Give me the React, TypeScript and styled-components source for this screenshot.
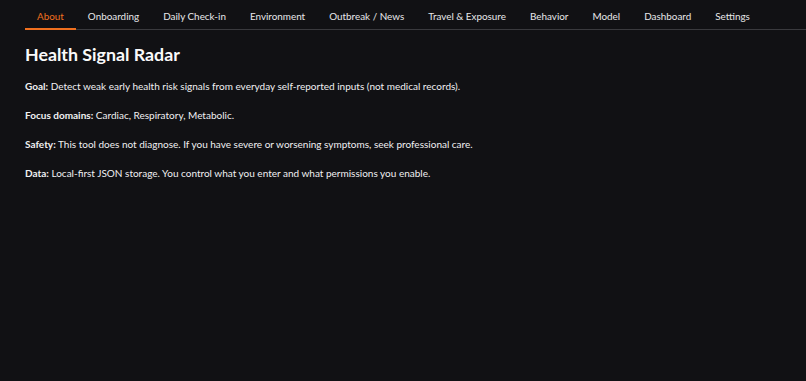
import React, { useState } from "react";
import styled, { createGlobalStyle } from "styled-components";

const GlobalStyle = createGlobalStyle`
    html, body {
        margin: 0;
        padding: 0;
        background-color: #111114;
    }
    body {
        font-family: Lato, "Liberation Sans", sans-serif;
        color: #fafafa;
    }
`;

const Page = styled.div`
    min-height: 381px;
    padding-left: 25px;
    background-color: #111114;
`;

const TabBar = styled.div`
    display: flex;
    align-items: flex-end;
    height: 29px;
    border-bottom: 1px solid #3a3a3e;
`;

const Tab = styled.button<{ $active?: boolean }>`
    display: flex;
    align-items: center;
    height: 28px;
    margin-bottom: -1px;
    padding: 2px 12px 0 12px;
    border: none;
    border-bottom: 2px solid ${(p) => (p.$active ? "#f0701f" : "transparent")};
    background-color: transparent;
    color: ${(p) => (p.$active ? "#f0701f" : "#e8e8ea")};
    font-family: Lato, "Liberation Sans", sans-serif;
    font-size: 9.9px;
    white-space: nowrap;
    cursor: pointer;
`;

const Content = styled.div`
    padding-top: 12px;
    padding-right: 25px;
`;

const Title = styled.h1`
    margin: 0 0 13px 0;
    color: #fafafa;
    font-size: 17.8px;
    font-weight: 700;
    line-height: 24px;
`;

const Para = styled.p`
    margin: 0 0 15px 0;
    color: #f0f0f2;
    font-size: 10px;
    line-height: 14px;
    b {
        font-weight: 700;
    }
`;

const tabs = [
    "About",
    "Onboarding",
    "Daily Check-in",
    "Environment",
    "Outbreak / News",
    "Travel & Exposure",
    "Behavior",
    "Model",
    "Dashboard",
    "Settings",
];

const App = () => {
    const [active, setActive] = useState("About");
    return (
        <>
            <GlobalStyle />
            <Page>
                <TabBar>
                    {tabs.map((t) => (
                        <Tab key={t} $active={t === active} onClick={() => setActive(t)}>
                            {t}
                        </Tab>
                    ))}
                </TabBar>
                <Content>
                    <Title>Health Signal Radar</Title>
                    <Para>
                        <b>Goal:</b> Detect weak early health risk signals from everyday self-reported inputs (not medical records).
                    </Para>
                    <Para>
                        <b>Focus domains:</b> Cardiac, Respiratory, Metabolic.
                    </Para>
                    <Para>
                        <b>Safety:</b> This tool does not diagnose. If you have severe or worsening symptoms, seek professional care.
                    </Para>
                    <Para>
                        <b>Data:</b> Local-first JSON storage. You control what you enter and what permissions you enable.
                    </Para>
                </Content>
            </Page>
        </>
    );
};

export default App;
